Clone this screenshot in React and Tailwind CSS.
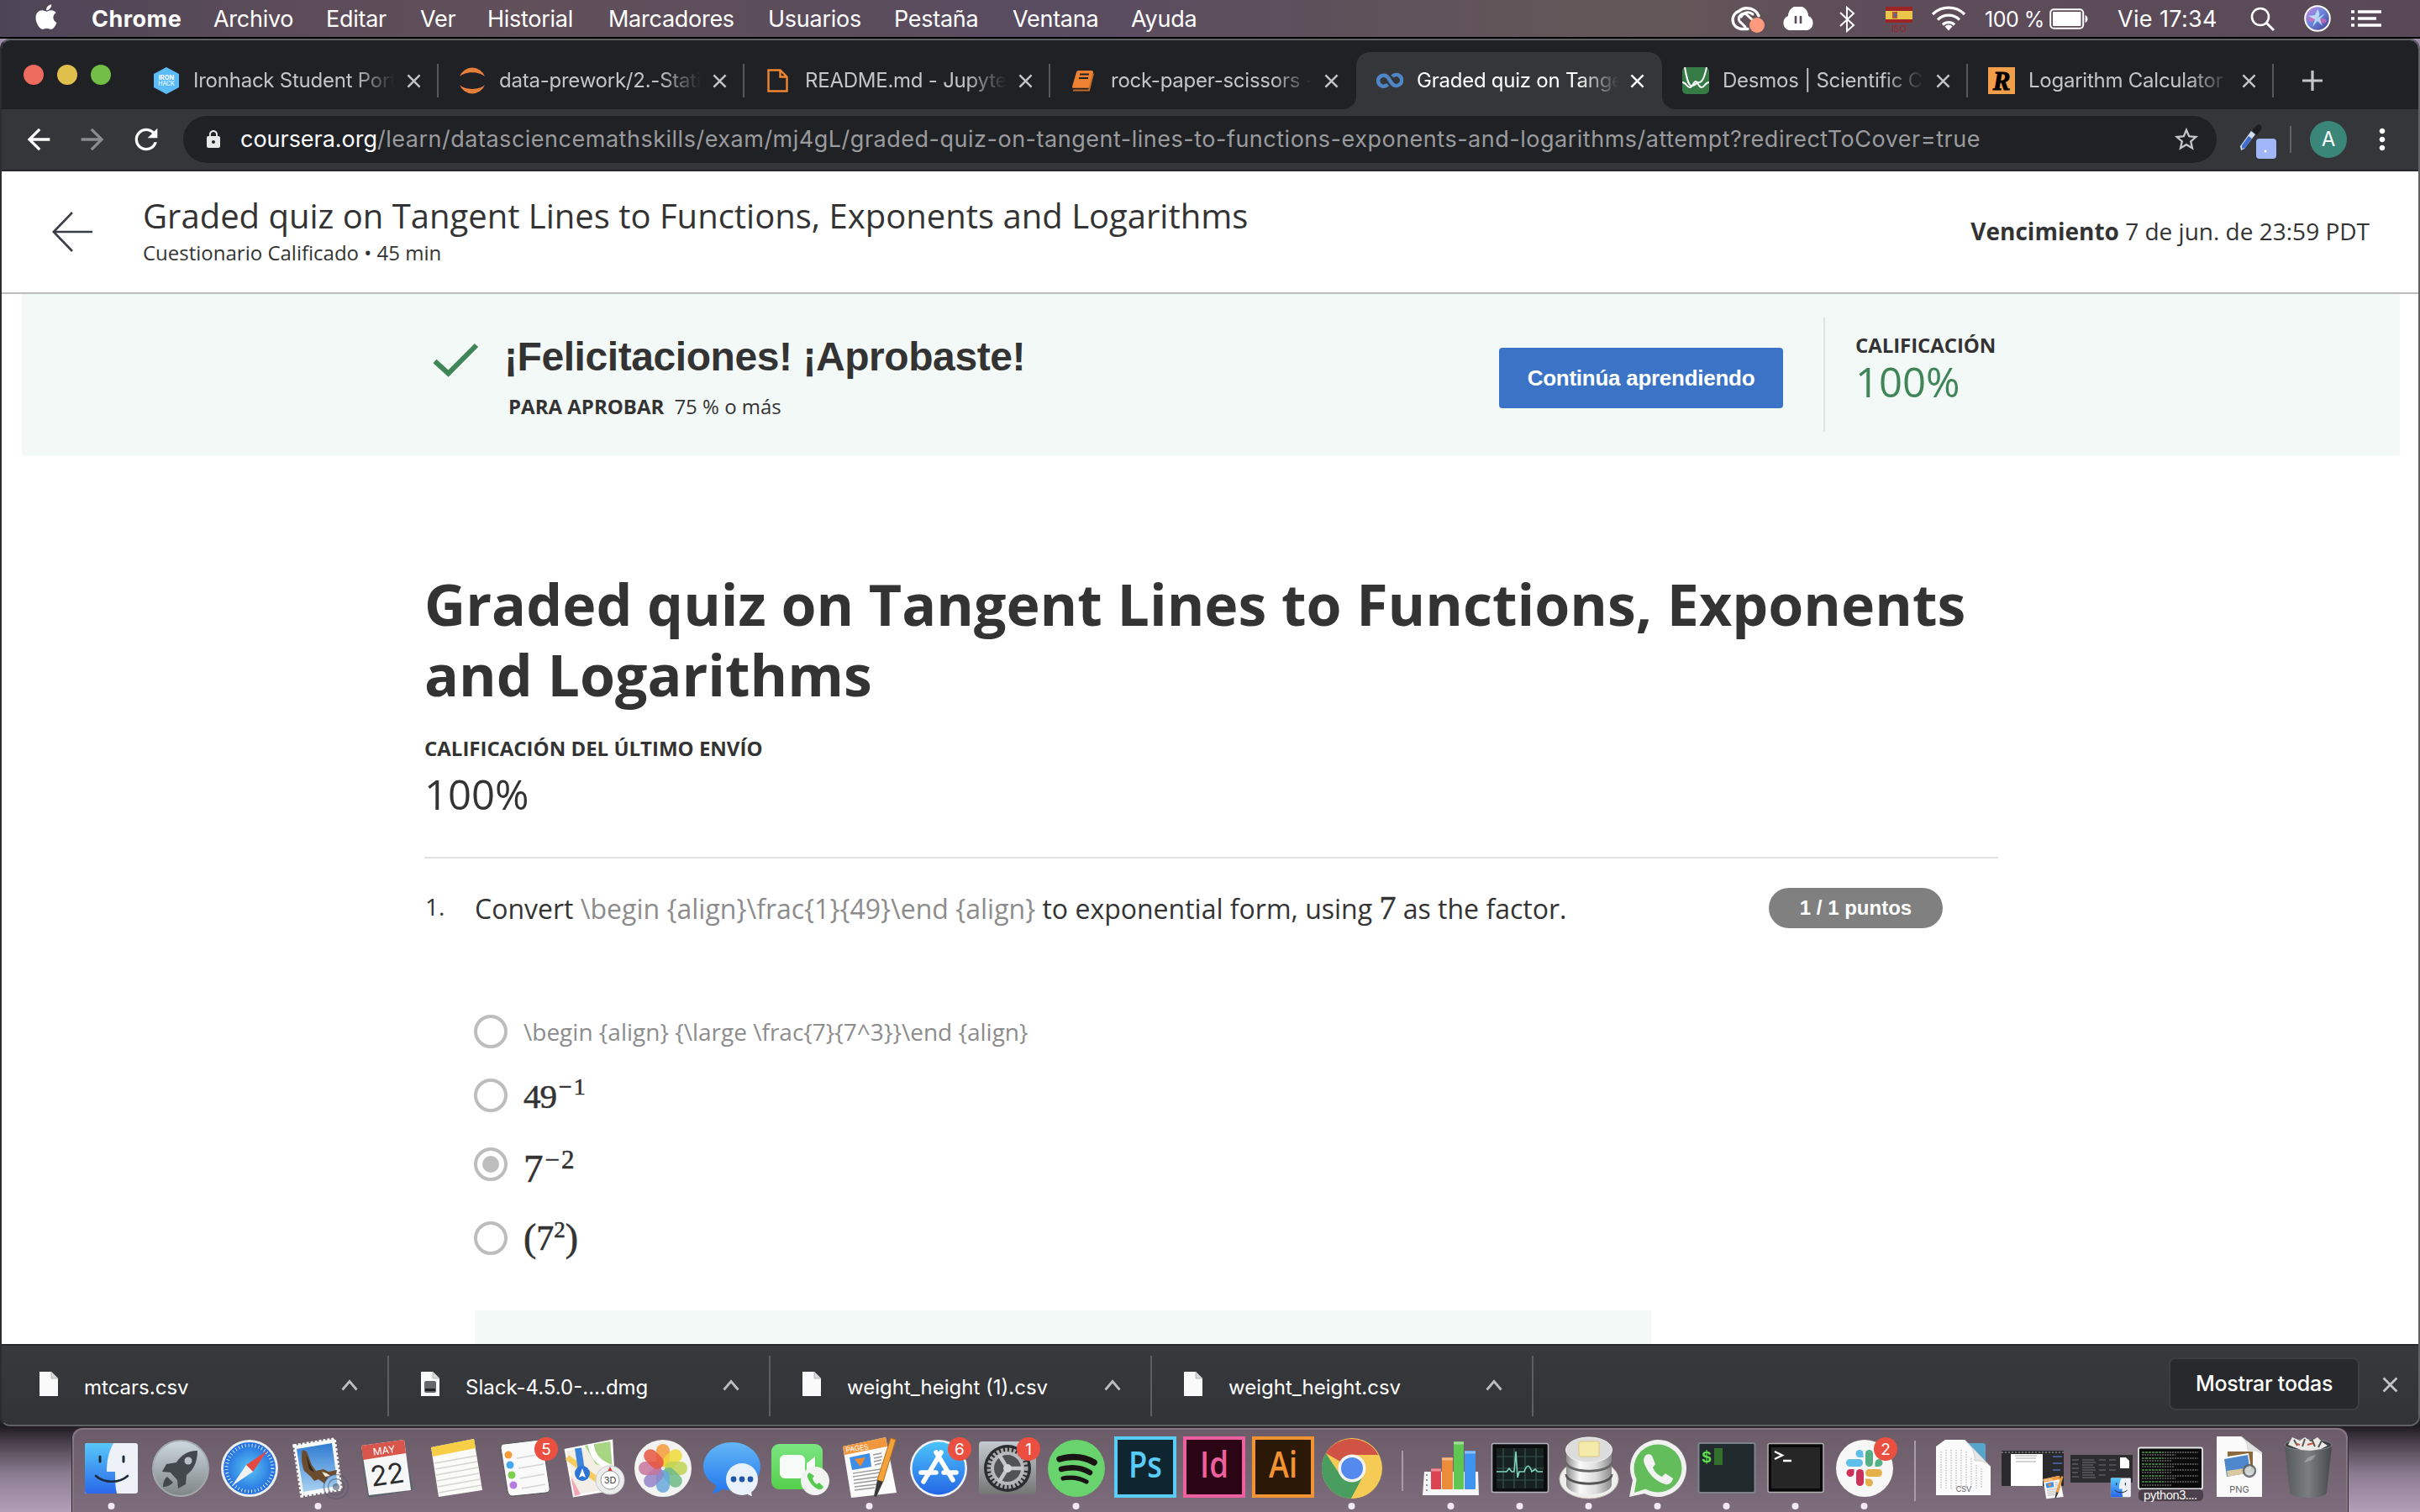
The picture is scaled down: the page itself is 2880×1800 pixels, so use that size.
import React from "react";
import { FaApple } from "react-icons/fa";
import { MdArrowBack, MdArrowForward, MdRefresh, MdLock, MdStarBorder, MdMoreVert } from "react-icons/md";

const UI = "font-['Inter','Liberation_Sans',sans-serif]";
const SERIF = "font-['Liberation_Serif',serif] [-webkit-text-stroke:0.6px_#333]";

/* ---------- macOS menu bar ---------- */

function MenuBar() {
  return (
    <div className="flex h-[46px] shrink-0 border-b-2 border-black bg-[linear-gradient(to_right,#4d4557,#5c4c59_12%,#61505a_22%,#5c4d5c_34%,#5a4c61_44%,#5f515a_56%,#645758_68%,#5e4e5a_76%,#594857)] text-[27px] leading-[46px] tracking-[-0.01em] whitespace-nowrap text-white">
      <div className="flex w-[109px] pt-[3px] pl-[38px]">
        <FaApple className="size-[34px]" />
      </div>
      <span className="w-[145px] font-bold tracking-[0.018em]">Chrome</span>
      <span className="w-[134px]">Archivo</span>
      <span className="w-[112px]">Editar</span>
      <span className="w-[80px]">Ver</span>
      <span className="w-[144px]">Historial</span>
      <span className="w-[190px]">Marcadores</span>
      <span className="w-[150px]">Usuarios</span>
      <span className="w-[141px]">Pestaña</span>
      <span className="w-[141px]">Ventana</span>
      <span className="w-[712px]">Ayuda</span>
      <svg className="mt-[8px] mr-[20px] h-[32px] w-[42px] shrink-0" viewBox="0 0 42 32" fill="none" stroke="#fff" strokeWidth="3.4" strokeLinecap="round">
        <path d="M22 26.500H14A11 11 0 0 1 12 5a12 12 0 0 1 9-3.200c7 0 12 4 14 9" />
        <path d="M19 24 12 17a6 6 0 0 1 8-8l9 8M14 12a9 9 0 0 1 14-3" strokeWidth="3" />
        <circle cx="33" cy="22" r="9" fill="#ff9b7c" stroke="none" />
      </svg>
      <svg className="mt-[8px] mr-[28px] h-[30px] w-[40px] shrink-0" viewBox="0 0 40 30">
        <path d="M9 28a9 9 0 0 1-1-17 12 12 0 0 1 24 0 9 9 0 0 1-1 17Z" fill="#fff" />
        <path d="M17 11v9M23 11v9" stroke="#5c4c59" strokeWidth="2.600" />
      </svg>
      <svg className="mt-[7px] mr-[34px] h-[32px] w-[21px] shrink-0" viewBox="0 0 21 32" fill="none" stroke="#fff" strokeWidth="2">
        <path d="m2 8 16 15-8 7V2l8 7L2 24" />
      </svg>
      <svg className="mt-[8px] mr-[21px] h-[32px] w-[34px] shrink-0" viewBox="0 0 34 32">
        <rect x="1" width="32" height="19" fill="#9d2526" />
        <rect x="1" y="5" width="32" height="10" fill="#ecc64a" />
        <rect x="9" y="6" width="6" height="8" fill="#b05a3a" />
        <rect x="11" y="8" width="3" height="4" fill="#5469a0" />
        <text x="17" y="30" textAnchor="middle" fontSize="11" fill="#9d2526" fontFamily="Inter">ISO</text>
      </svg>
      <svg className="mt-[7px] mr-[22px] h-[30px] w-[42px] shrink-0" viewBox="0 0 42 30" fill="none" stroke="#fff" strokeWidth="3.200">
        <path d="M2 10a27 27 0 0 1 38 0M8 16.500a18.500 18.500 0 0 1 26 0M14 22.500a10 10 0 0 1 14 0" />
        <path d="m16.500 24.500 4.500 5 4.500-5a6 6 0 0 0-9 0Z" fill="#fff" stroke="none" />
      </svg>
      <span className="w-[77px] text-[25px] tracking-[-0.02em]">100 %</span>
      <svg className="mt-[10px] mr-[35px] h-[25px] w-[46px] shrink-0" viewBox="0 0 46 25">
        <rect x="1.200" y="1.200" width="39" height="22.500" rx="4" fill="none" stroke="#fff" strokeWidth="2" />
        <rect x="4" y="4" width="33.500" height="17" rx="1" fill="#fff" />
        <path d="M42.500 8c4 1.500 4 7.500 0 9Z" fill="#fff" />
      </svg>
      <span className="w-[158px] tracking-[0.013em]">Vie 17:34</span>
      <svg className="mt-[8px] mr-[34px] h-[30px] w-[30px] shrink-0" viewBox="0 0 30 30" fill="none" stroke="#fff" strokeWidth="2.600">
        <circle cx="12" cy="12" r="10" />
        <path d="m19 19 9 9" strokeWidth="3" />
      </svg>
      <svg className="mt-[6px] mr-[24px] h-[32px] w-[32px] shrink-0" viewBox="0 0 32 32">
        <defs>
          <linearGradient id="siri" x1="0" y1="0" x2="1" y2="1">
            <stop offset="0" stopColor="#d884d8" />
            <stop offset=".45" stopColor="#6c86e0" />
            <stop offset="1" stopColor="#3d3a86" />
          </linearGradient>
        </defs>
        <circle cx="16" cy="16" r="14.800" fill="url(#siri)" stroke="#fff" strokeWidth="2" />
        <path d="M5 18c4-5 7-7 9-2-3 4-6 5-9 2Z" fill="#e06ab4" opacity=".8" />
        <path d="M18 17c5-2 8-1 9 2-2 4-6 4-9-2Z" fill="#e06ab4" opacity=".7" />
        <path d="M16 5c3 4 3 7 1 10l8-5-6 7 3 8-6-6-6 7 3-9-8-4 8-1Z" fill="#c9f4ff" opacity=".75" />
      </svg>
      <svg className="mt-[12px] h-[22px] w-[38px] shrink-0" viewBox="0 0 38 22" stroke="#fff" strokeWidth="3.600">
        <path d="M0 2h4M8 2h28M0 10h4M8 10h22M0 18h4M8 18h28" />
      </svg>
    </div>
  );
}

/* ---------- Tabs ---------- */

const favicons = {
  iron: (
    <svg viewBox="0 0 32 32" className="size-8">
      <path d="m16 0 15 8v16l-15 8-15-8V8Z" fill="#5cbcf8" />
      <text x="16" y="15" textAnchor="middle" fontSize="7.500" fontWeight="700" fill="#fff" fontFamily="Inter">IRON</text>
      <text x="16" y="22" textAnchor="middle" fontSize="7" fill="#fff" fontFamily="Inter">HACK</text>
    </svg>
  ),
  jupyter: (
    <svg viewBox="0 0 32 32" className="size-8" fill="#e8803b">
      <path d="M1 11a16 16 0 0 1 30 0C24 4.500 8 4.500 1 11Z" />
      <path d="M1 21a16 16 0 0 0 30 0C24 27.500 8 27.500 1 21Z" />
    </svg>
  ),
  doc: (
    <svg viewBox="0 0 32 32" className="size-8" fill="none" stroke="#f08731" strokeWidth="2.400">
      <path d="M4.500 3.500h14l8 8v17h-22ZM18.500 3.500v8h8" />
    </svg>
  ),
  book: (
    <svg viewBox="0 0 32 32" className="size-8">
      <path d="M9 4h16a2 2 0 0 1 2 2l-4 19H3a2 2 0 0 1-1-2L7 6a3 3 0 0 1 2-2Z" fill="#ef8230" />
      <path d="M11 8.500h11M10 13h11" stroke="#202124" strokeWidth="2" />
      <path d="M3 25.500h19" stroke="#202124" strokeWidth="1.600" />
      <path d="M3 27.500h19l5-20" stroke="#c56b28" strokeWidth="2" fill="none" />
    </svg>
  ),
  coursera: (
    <svg viewBox="0 0 32 32" className="size-8" fill="none" stroke="#4f86c6" strokeWidth="4.600">
      <path d="M13.500 20.500A6.500 6.500 0 1 1 13 11.500c2.500 2 4 7 6.500 9a6.500 6.500 0 1 0-.500-9.500" />
    </svg>
  ),
  desmos: (
    <svg viewBox="0 0 32 32" className="size-8">
      <rect width="32" height="32" rx="5" fill="#367a45" />
      <path d="M3 0c2 11 4 22 8 22 5 0 6-4 9-4 4 0 7-8 9-18" fill="none" stroke="#fff" strokeWidth="2" />
      <path d="M0 18c5 0 5 6 9 6s4-7 7-7 3 7 7 7 4-6 9-6" fill="none" stroke="#fff" strokeWidth="2" />
    </svg>
  ),
  r: (
    <svg viewBox="0 0 32 32" className="size-8">
      <rect width="32" height="32" fill="#f29f4c" />
      <text x="16" y="26.500" textAnchor="middle" fontSize="31" fontWeight="700" fontStyle="italic" fill="#000" stroke="#000" strokeWidth="1" fontFamily="Liberation Serif">R</text>
    </svg>
  ),
};

const tabs = [
  { icon: "iron", title: "Ironhack Student Portal", sep: true },
  { icon: "jupyter", title: "data-prework/2.-Statistics", sep: true },
  { icon: "doc", title: "README.md - Jupyter", sep: true },
  { icon: "book", title: "rock-paper-scissors -", sep: false },
  { icon: "coursera", title: "Graded quiz on Tangent", active: true },
  { icon: "desmos", title: "Desmos | Scientific Calc", sep: true },
  { icon: "r", title: "Logarithm Calculator", sep: true },
];

function Cross({ className }) {
  return (
    <svg viewBox="0 0 18 18" className={className} fill="none" stroke="currentColor" strokeWidth="2.600">
      <path d="m1.500 1.500 15 15M16.500 1.500l-15 15" />
    </svg>
  );
}

function Tab({ icon, title, sep, active }) {
  return (
    <div className={active ? "relative flex h-[68px] w-[364px] shrink-0 items-center rounded-t-2xl bg-[#35363a] pl-6 text-white" : "relative flex h-[68px] w-[364px] shrink-0 items-center pl-6 text-[#c3c5c9]"}>
      {active && (
        <>
          <span className="absolute bottom-0 -left-4 size-4 bg-[radial-gradient(circle_at_top_left,transparent_16px,#35363a_16.500px)]" />
          <span className="absolute -right-4 bottom-0 size-4 bg-[radial-gradient(circle_at_top_right,transparent_16px,#35363a_16.500px)]" />
        </>
      )}
      <span className="w-[48px] shrink-0">{favicons[icon]}</span>
      <span className="w-[240px] shrink-0 overflow-hidden text-[24px] tracking-[-0.01em] whitespace-nowrap [mask-image:linear-gradient(to_right,black_80%,transparent_100%)]">{title}</span>
      <Cross className="ml-[14px] size-[17px]" />
      {sep && <span className="ml-auto h-10 w-[2px] bg-[#55575b]" />}
    </div>
  );
}

function TabStrip() {
  return (
    <div className="flex h-[82px] shrink-0 items-end bg-[#202124]">
      <div className="flex h-[68px] w-[156px] shrink-0 gap-4 pt-[15px] pl-[26px]">
        <span className="size-6 rounded-full bg-[#ed6a5e]" />
        <span className="size-6 rounded-full bg-[#e0c04c]" />
        <span className="size-6 rounded-full bg-[#72be47]" />
      </div>
      {tabs.map((t) => (
        <Tab key={t.title} {...t} />
      ))}
      <svg viewBox="0 0 24 24" className="mb-[22px] ml-[34px] size-6" stroke="#c3c5c9" strokeWidth="3.200">
        <path d="M12 0v24M0 12h24" />
      </svg>
    </div>
  );
}

function Toolbar() {
  return (
    <div className="flex h-[74px] shrink-0 items-center border-b-2 border-[#28272b] bg-[#35363a] pl-[24px] text-white">
      <MdArrowBack className="size-10" />
      <MdArrowForward className="ml-6 size-10 text-[#8b8c8f]" />
      <MdRefresh className="ml-6 size-10" />
      <div className="ml-[24px] flex h-14 w-[2420px] items-center rounded-full bg-[#202124] pl-[24px]">
        <MdLock className="size-6 text-[#e8e8e8]" />
        <span className="ml-[20px] text-[27px] tracking-[0.510px] whitespace-nowrap text-[#9a9b9e]">
          <span className="tracking-[-0.001em] text-white">coursera.org</span>/learn/datasciencemathskills/exam/mj4gL/graded-quiz-on-tangent-lines-to-functions-exponents-and-logarithms/attempt?redirectToCover=true
        </span>
        <MdStarBorder className="mr-[19px] ml-auto size-[34px] shrink-0 text-[#c6c6c8]" />
      </div>
      <svg viewBox="0 0 46 46" className="ml-[28px] h-[46px] w-[46px]">
        <path d="m0 31 13-18 5 4L5 34l-4 2Z" fill="#d5deee" />
        <path d="m2 30 8-11 4 3-8 11-4 1Z" fill="#3f6ed0" />
        <path d="m14 12 6-6c3-2 7 1 5 5l-5 7Z" fill="#1d1d1f" />
        <rect x="19" y="22" width="24" height="24" rx="4" fill="#a1b5fb" />
        <circle cx="30" cy="37" r="1.500" fill="#fff" />
      </svg>
      <span className="ml-[13px] h-8 w-[2px] bg-[#5f6165]" />
      <span className="ml-[22px] flex size-11 items-center justify-center rounded-full bg-[#3a877a] text-[24px]">A</span>
      <MdMoreVert className="ml-[22px] size-10" />
    </div>
  );
}

/* ---------- Page ---------- */

function QuizHeader() {
  return (
    <div className="flex h-[146px] shrink-0 border-b-2 border-[#bdbdbd] bg-white text-[#333]">
      <svg viewBox="0 0 48 48" className="mt-[48px] ml-[60px] h-12 w-12" fill="none" stroke="#3a3d45" strokeWidth="2.600">
        <path d="M24 1 1.800 24 24 47M2 24h46" />
      </svg>
      <div className="ml-[60px] pt-[29px]">
        <div className="text-[40px] leading-[48px] whitespace-nowrap">Graded quiz on Tangent Lines to Functions, Exponents and Logarithms</div>
        <div className="mt-1 text-[24px] leading-8">Cuestionario Calificado • 45 min</div>
      </div>
      <div className="mr-[58px] ml-auto self-center pb-[2px] text-[28px] leading-10">
        <span className="font-bold">Vencimiento</span> 7 de jun. de 23:59 PDT
      </div>
    </div>
  );
}

function Banner() {
  return (
    <div className="mr-[22px] ml-[24px] flex h-[192px] shrink-0 bg-[#f3f9f7] text-[#333]">
      <svg viewBox="0 0 56 42" className="mt-[58px] ml-[488px] h-[42px] w-[56px]" fill="none" stroke="#3f8558" strokeWidth="6">
        <path d="m3.500 22 16 14.500L53 3" />
      </svg>
      <div className="ml-[30px] w-[1184px] pt-[47px]">
        <div className="font-['Liberation_Sans',Arial,sans-serif] text-[48px] leading-[56px] font-bold tracking-[-0.009em]">¡Felicitaciones! ¡Aprobaste!</div>
        <div className="mt-[15px] ml-[5px] text-[24px] leading-8">
          <span className="mr-3 font-bold">PARA APROBAR</span>75 % o más
        </div>
      </div>
      <button className="mt-[64px] flex h-[72px] w-[338px] items-center justify-center rounded-[4px] bg-[#3b74c6] font-['Liberation_Sans',Arial,sans-serif] text-[26px] font-bold tracking-[-0.010em] whitespace-nowrap text-white">
        Continúa aprendiendo
      </button>
      <div className="mt-[28px] ml-[48px] h-[136px] w-[2px] bg-[#dfe3e2]" />
      <div className="ml-[36px] pt-[45px]">
        <div className="text-[24px] leading-8 font-bold tracking-[-0.003em]">CALIFICACIÓN</div>
        <div className="-mt-px text-[49px] leading-[56px] text-[#3f8558]">100%</div>
      </div>
    </div>
  );
}

function Option({ checked, className, children }) {
  return (
    <div className={"flex h-10 items-start " + className}>
      <span className="mr-[19px] flex size-10 shrink-0 items-center justify-center rounded-full border-4 border-[#bdbdbd]">
        {checked && <span className="size-5 rounded-full bg-[#bdbdbd]" />}
      </span>
      {children}
    </div>
  );
}

function Question() {
  return (
    <div className="flex pl-px">
      <div className="mt-[37px] w-[59px] shrink-0 text-[28px] leading-10">1.</div>
      <div className="w-[1401px] shrink-0">
        <div className="mt-[39px] h-10 text-[32px] leading-10 whitespace-nowrap">
          Convert <span className="text-[#8c8c8c]">\begin {"{align}"}\frac{"{1}{49}"}\end {"{align}"}</span> to exponential form, using{" "}
          <span className={"text-[40px] leading-none " + SERIF}>7</span> as the factor.
        </div>
        <div className="mt-[107px] -ml-px">
          <Option className="">
            <span className="text-[28px] leading-10 whitespace-nowrap text-[#8c8c8c]">\begin {"{align}"} {"{"}\large \frac{"{7}{7^3}}"}\end {"{align}"}</span>
          </Option>
          <Option className="mt-9">
            <span className={"mt-px text-[41px] leading-10 tracking-[-1px] " + SERIF}>49</span>
            <span className={"-mt-1 ml-[3px] text-[28px] leading-7 tracking-[2px] " + SERIF}>−1</span>
          </Option>
          <Option checked className="mt-[42px]">
            <span className={"mt-[5px] text-[47px] leading-10 " + SERIF}>7</span>
            <span className={"ml-[2px] text-[31px] leading-[30px] tracking-[2px] " + SERIF}>−2</span>
          </Option>
          <Option className="mt-12">
            <span className={"text-[46px] leading-10 " + SERIF}>(</span>
            <span className={"text-[42px] leading-10 " + SERIF}>7</span>
            <span className={"-mt-1 text-[27px] leading-7 " + SERIF}>2</span>
            <span className={"text-[46px] leading-10 " + SERIF}>)</span>
          </Option>
        </div>
        <div className="mt-[66px] h-10 w-[1400px] bg-[#f3f9f7]" />
      </div>
      <div className="mt-[35px] ml-[139px] flex h-12 w-[207px] items-center justify-center rounded-full bg-[#808080] font-['Liberation_Sans',Arial,sans-serif] text-[24px] font-bold text-white">
        1 / 1 puntos
      </div>
    </div>
  );
}

function Page() {
  return (
    <div className="flex h-[1396px] shrink-0 flex-col overflow-hidden bg-white font-['Open_Sans','Noto_Sans',sans-serif]">
      <QuizHeader />
      <Banner />
      <div className="ml-[503px] w-[1873px] text-[#333]">
        <h1 className="mt-[135px] text-[68px] leading-[84px] font-bold whitespace-nowrap">
          Graded quiz on Tangent Lines to Functions, Exponents
          <br />
          and Logarithms
        </h1>
        <div className="mt-[30px] text-[24px] leading-8 font-bold">CALIFICACIÓN DEL ÚLTIMO ENVÍO</div>
        <div className="mt-[10px] text-[49px] leading-[56px]">100%</div>
        <div className="mt-[47px] h-[2px] bg-[#e1e1e1]" />
        <Question />
      </div>
    </div>
  );
}

/* ---------- Downloads shelf ---------- */

function DownloadItem({ name, disk, className }) {
  return (
    <div className={"flex h-[72px] shrink-0 items-start border-r-2 border-[#5d5e62] " + className}>
      <svg viewBox="0 0 24 32" className="mt-[18px] h-[32px] w-[24px]">
        <path d="M1 1h14l8 8v21H1Z" fill="#fafafa" />
        <path d="M15 1v8h8" fill="#d9d9d9" stroke="#aaa" strokeWidth=".8" />
        {disk && <rect x="5" y="12" width="14" height="14" rx="2" fill="#64686c" />}
        {disk && <rect x="6" y="21" width="12" height="3" fill="#1f2022" />}
      </svg>
      <span className="mt-[18px] ml-[30px] text-[24px] leading-10 whitespace-nowrap">{name}</span>
      <svg viewBox="0 0 20 14" className="mt-[28px] mr-[35px] ml-auto h-[14px] w-5" fill="none" stroke="#bdbdbf" strokeWidth="2.800">
        <path d="m1.500 12.500 8.500-10 8.500 10" />
      </svg>
    </div>
  );
}

function Downloads() {
  return (
    <div className="flex h-[96px] shrink-0 items-start border-t-2 border-[#26282a] bg-[linear-gradient(#38393c,#323337)] pt-3 text-white">
      <DownloadItem name="mtcars.csv" className="w-[461px] pl-[44px]" />
      <DownloadItem name="Slack-4.5.0-....dmg" disk className="w-[454px] pl-[37px]" />
      <DownloadItem name="weight_height (1).csv" className="w-[454px] pl-[37px]" />
      <DownloadItem name="weight_height.csv" className="w-[454px] pl-[37px]" />
      <div className="mt-[2px] ml-auto flex h-[63px] w-[227px] items-center justify-center rounded-lg border-2 border-[#3d3e41] bg-[#28292c] text-[25px] font-medium tracking-[-0.01em] whitespace-nowrap">Mostrar todas</div>
      <Cross className="mt-[25px] mr-[24px] ml-[27px] size-[19px] text-[#c4c4c6]" />
    </div>
  );
}

/* ---------- Dock ---------- */

function Badge({ n }) {
  return (
    <g>
      <circle cx="66" cy="24" r="14" fill="#ea4f40" />
      <text x="66" y="31" textAnchor="middle" fontSize="19" fill="#fff" fontFamily="Inter">{n}</text>
    </g>
  );
}

function Gradient({ id, from, to }) {
  return (
    <linearGradient id={id} x1="0" y1="0" x2="0" y2="1">
      <stop offset="0" stopColor={from} />
      <stop offset="1" stopColor={to} />
    </linearGradient>
  );
}

const FinderFace = () => (
  <g>
    <rect x="9" y="17" width="63" height="60" rx="3" fill="#eef1f7" />
    <path d="M12 17h31c-6 11-8 22-8 34h10c0 9 0 18 2 26H12a3 3 0 0 1-3-3V20a3 3 0 0 1 3-3Z" fill="url(#finder)" />
    <path d="M27 33v6M55 33v6" stroke="#1d2a3c" strokeWidth="3" strokeLinecap="round" />
    <path d="M22 56c10 9 28 9 38 0" stroke="#1d2a3c" strokeWidth="2.600" fill="none" strokeLinecap="round" />
  </g>
);

const PagesIcon = () => (
  <g>
    <path d="m9 21 51-11 13 66-54 6Z" fill="#fbfbfb" />
    <path d="m9 21 51-11 2 11-51 10Z" fill="#f0973d" />
    <text x="13" y="28" fontSize="8.500" fill="#fff" fontFamily="Inter" transform="rotate(-8 13 28)">PAGES</text>
    <path d="m17 34 24-5 2 16-23 4Z" fill="#3c8ee8" />
    <path d="m23 36 13-2-6 11Z" fill="#f08a2c" />
    <path d="m45 31 10-2M46 35l10-2M46 39l9-2M47 43l8-2M21 53l33-5M21 57l32-5M22 61l30-4M22 65l29-4M23 69l26-3M23 73l24-3" stroke="#9a9a9a" strokeWidth="1.300" />
    <path d="m66 11 6 2-15 50-7-2Z" fill="#f3a33a" stroke="#b76d1c" />
    <path d="m50 61 7 2-8 18-3-1Z" fill="#3a3a3c" />
  </g>
);

const photoPetals = ["#f59b3c", "#efd93b", "#bfd355", "#6db987", "#68a9dd", "#9384c9", "#c5749e", "#e8553f"];

function AdobeTile({ label, edge, fill }) {
  return (
    <g>
      <rect x="6" y="11" width="70" height="69" fill={fill} stroke={edge} strokeWidth="4" />
      <text x="41" y="58" textAnchor="middle" fontSize="44" fontWeight="600" fill={edge} fontFamily="Open Sans" textLength={label === "Ps" ? 40 : 34} lengthAdjust="spacingAndGlyphs">{label}</text>
    </g>
  );
}

const apps = [
  { id: "finder", dot: true, art: <g><defs><Gradient id="finder" from="#58c8fa" to="#2a68ea" /></defs><FinderFace /></g> },
  {
    id: "launchpad",
    art: (
      <g>
        <defs><Gradient id="launch" from="#cdd9df" to="#7f8585" /></defs>
        <circle cx="41" cy="47" r="33" fill="url(#launch)" stroke="#a3aaad" strokeWidth="2" />
        <path d="M61 26c-12 0-20 6-25 14l-12 2-5 9 10 1 8 9 1 10 9-5 1-11c8-6 13-15 13-29Z" fill="#43484c" />
        <circle cx="50" cy="38" r="4.500" fill="#b8c1c5" />
        <path d="M25 57c-4 3-5 8-5 12 5 0 9-2 12-5Z" fill="#43484c" />
      </g>
    ),
  },
  {
    id: "safari",
    art: (
      <g>
        <defs><radialGradient id="safari"><stop offset="0" stopColor="#5ac6f2" /><stop offset="1" stopColor="#216ce0" /></radialGradient></defs>
        <circle cx="41" cy="47" r="34" fill="#eceff2" />
        <circle cx="41" cy="47" r="31" fill="url(#safari)" />
        <circle cx="41" cy="47" r="27.500" fill="none" stroke="#d6ecfa" strokeWidth="4" strokeDasharray="1 3" />
        <path d="m62 26-17 25-8-8Z" fill="#e5483e" />
        <path d="m20 68 17-25 8 8Z" fill="#f2f2f2" />
      </g>
    ),
  },
  {
    id: "mail",
    dot: true,
    art: (
      <g>
        <defs><Gradient id="sky" from="#2f7bd2" to="#a8d2f2" /></defs>
        <path d="m12 20 48-8 8 60-47 8Z" fill="#f7f8f8" stroke="#f7f8f8" strokeWidth="3.500" strokeDasharray="3 2" />
        <path d="m15 24 42-7 7 51-41 7Z" fill="url(#sky)" />
        <path d="m22 25 5 2 6 16 5 7 9-2 6 3 10-2-1 5-9 3-5 8-7-5-5 2-4-5-8-7c-3-8-4-16-2-25Z" fill="#6b4c2f" />
        <path d="m26 30 5 13 5 9-6-4Z" fill="#2f261f" />
        <path d="m45 51 6 2 4 3-6 1Z" fill="#f1ead9" />
        <circle cx="62" cy="69" r="14.500" fill="none" stroke="#4d566a" strokeWidth="1.600" opacity=".55" />
        <circle cx="62" cy="69" r="9.500" fill="none" stroke="#4d566a" strokeWidth="1.600" opacity=".55" />
        <circle cx="62" cy="69" r="4" fill="#4d566a" opacity=".6" />
      </g>
    ),
  },
  {
    id: "calendar",
    art: (
      <g>
        <path d="m9 25 51-10 12 58-54 9Z" fill="#59646c" />
        <path d="m10 20 51-7 8 60-50 6Z" fill="#f7f7f7" />
        <path d="m10 20 51-7 2 16-51 8Z" fill="#d8554c" />
        <text x="37" y="30" textAnchor="middle" fontSize="12" fill="#fff" fontFamily="Inter" transform="rotate(-8 37 25)">MAY</text>
        <text x="41" y="66" textAnchor="middle" fontSize="33" fill="#2d2d2d" fontFamily="Inter" transform="rotate(-8 41 56)">22</text>
      </g>
    ),
  },
  {
    id: "notes",
    art: (
      <g>
        <path d="m11 22 51-10 10 61-52 8Z" fill="#fbfbf8" />
        <path d="m11 22 51-10 2 11-51 10Z" fill="#f6cf47" />
        <path d="m15 41 50-9M16 48l50-9M17 55l50-9M18 62l50-9M19 69l50-9M20 76l51-9" stroke="#d4d4d0" strokeWidth="1.500" />
      </g>
    ),
  },
  {
    id: "reminders",
    art: (
      <g>
        <path d="M16 18 58 13q3 0 4 4l8 53q1 5-4 6l-40 4q-5 0-6-6l-8-51q0-5 4-5Z" fill="#fafafa" stroke="#55565a" strokeWidth="1" />
        <circle cx="21" cy="31" r="4.500" fill="#f39c38" />
        <circle cx="23" cy="43" r="4.500" fill="#46a6ee" />
        <circle cx="25" cy="55" r="4.500" fill="#7cd04c" />
        <circle cx="27" cy="67" r="4.500" fill="#b87ae0" />
        <path d="m31 35 30-5M33 47l30-5M35 59l29-5M37 71l28-5" stroke="#d5d5d8" strokeWidth="1.400" />
        <Badge n="5" />
      </g>
    ),
  },
  {
    id: "maps",
    art: (
      <g>
        <path d="m7 25 55-11 3 58-48 8Z" fill="#f4efe6" stroke="#fff" strokeWidth="2.500" />
        <path d="m30 20 30-5 3 33-20-6Z" fill="#a7d584" />
        <path d="m9 34 48 36" stroke="#f7cc5c" strokeWidth="7" />
        <path d="m22 23 5 33" stroke="#3d84dc" strokeWidth="8" />
        <path d="M37 18c2 14 8 22 24 28" stroke="#fff" strokeWidth="7" fill="none" />
        <path d="m13 56 12 22-7 2Z" fill="#f3a6b5" />
        <circle cx="27" cy="53" r="9" fill="#2d74d8" />
        <path d="m27 47 4 11-4-2-4 2Z" fill="#fff" />
        <circle cx="60" cy="61" r="17" fill="#eceded" stroke="#c9cbcd" />
        <circle cx="60" cy="61" r="11" fill="#fff" stroke="#9a9a9d" />
        <text x="60" y="65" textAnchor="middle" fontSize="11" fill="#444" fontFamily="Inter">3D</text>
        <path d="m60 45 2.500 5h-5Z" fill="#d33" />
      </g>
    ),
  },
  {
    id: "photos",
    art: (
      <g>
        <circle cx="41" cy="47" r="34" fill="#f3f3f2" />
        {photoPetals.map((c, i) => (
          <rect key={c} x="33" y="18" width="16" height="27" rx="8" fill={c} opacity=".85" transform={`rotate(${i * 45} 41 47)`} />
        ))}
      </g>
    ),
  },
  {
    id: "messages",
    art: (
      <g>
        <defs><Gradient id="msg" from="#64b7f6" to="#2277ee" /></defs>
        <path d="M41 16c19 0 34 13 34 29S60 73 41 73c-4 0-8-.500-11-1.500-3 3-8 5-13 5 3-3 5-6 5-9C13 62 7 54 7 45c0-16 15-29 34-29Z" fill="url(#msg)" />
        <circle cx="53" cy="60" r="19" fill="#e9f2fb" />
        <path d="M58 76c3 3 5 4 7 4-1-3-1-5 0-8Z" fill="#e9f2fb" />
        <circle cx="43" cy="60" r="3.400" fill="#2456a8" /><circle cx="53" cy="60" r="3.400" fill="#2456a8" /><circle cx="63" cy="60" r="3.400" fill="#2456a8" />
      </g>
    ),
  },
  {
    id: "facetime",
    art: (
      <g>
        <defs><Gradient id="ft" from="#7be581" to="#56cf4b" /></defs>
        <rect x="6" y="18" width="61" height="54" rx="9" fill="url(#ft)" />
        <rect x="16" y="31" width="30" height="28" rx="6" fill="#f7fbf7" />
        <path d="m48 41 10-8v24l-10-8Z" fill="#f7fbf7" />
        <circle cx="58" cy="62" r="17" fill="#f2f4f2" />
        <path d="M51 52c-2 2-3 4-1 8 3 6 7 10 12 12 3 1 5-1 6-3l-5-5-3 2c-3-2-4-4-5-7l2-3Z" fill="#55c950" />
      </g>
    ),
  },
  { id: "pages", dot: true, art: <PagesIcon /> },
  {
    id: "appstore",
    art: (
      <g>
        <defs><Gradient id="store" from="#4cc3fa" to="#2466e6" /></defs>
        <circle cx="41" cy="47" r="34" fill="#f1f2f4" />
        <circle cx="41" cy="47" r="31.500" fill="url(#store)" />
        <path d="M44 28 28 55M38 28l20 33M20 52h18M47 52h15M26 58l-3 5" stroke="#fff" strokeWidth="5.500" strokeLinecap="round" />
        <Badge n="6" />
      </g>
    ),
  },
  {
    id: "settings",
    art: (
      <g>
        <defs><Gradient id="set" from="#c3cbd0" to="#757674" /></defs>
        <rect x="7" y="15" width="68" height="63" rx="4" fill="url(#set)" />
        <circle cx="41" cy="47" r="28" fill="#2b2c2e" />
        <circle cx="41" cy="47" r="22" fill="none" stroke="#a6a8aa" strokeWidth="5" strokeDasharray="3 2" />
        <circle cx="41" cy="47" r="18" fill="#505255" stroke="#b7b9bb" strokeWidth="4" />
        <path d="M41 47H60M41 47 31 31M41 47 31 63" stroke="#c3c5c7" strokeWidth="4.500" />
        <circle cx="41" cy="47" r="5" fill="#d3d4d5" />
        <Badge n="1" />
      </g>
    ),
  },
  {
    id: "spotify",
    dot: true,
    art: (
      <g fill="none" stroke="#191414" strokeLinecap="round">
        <circle cx="41" cy="47" r="34" fill="#69d36e" stroke="none" />
        <path d="M21 36c14-4 29-3 41 4" strokeWidth="7.500" />
        <path d="M23 48c12-3 24-2 34 4" strokeWidth="6.500" />
        <path d="M25 59c10-2 19-1 28 4" strokeWidth="5.200" />
      </g>
    ),
  },
  { id: "ps", art: <AdobeTile label="Ps" edge="#58cdf8" fill="#0f2530" /> },
  { id: "id", art: <AdobeTile label="Id" edge="#ee5f9f" fill="#2b0513" /> },
  { id: "ai", art: <AdobeTile label="Ai" edge="#f19330" fill="#2c1806" /> },
  {
    id: "chrome",
    dot: true,
    art: (
      <g>
        <circle cx="41" cy="47" r="36" fill="#f5cb56" />
        <path d="M41 47 9.800 29A36 36 0 0 1 72.200 31H41Z" fill="#d05345" />
        <path d="M9.800 29A36 36 0 0 0 40 83L55 55 41 47 27 55Z" fill="#489d5f" />
        <path d="M41 31h31.200A36 36 0 0 1 40 83L55 55Z" fill="#f5cb56" />
        <circle cx="41" cy="47" r="16.500" fill="#f4f4f4" />
        <circle cx="41" cy="47" r="13" fill="#5489ee" />
      </g>
    ),
  },
];

const running = [
  {
    id: "numbers",
    dot: true,
    art: (
      <g>
        <path d="M9 51h64l1 28H7Z" fill="#f6f6f6" />
        <path d="M12 54v23" stroke="#999" strokeWidth="2" strokeDasharray="2 4" />
        <rect x="17" y="47" width="12" height="25" rx="1" fill="#dc4351" />
        <rect x="30" y="34" width="13" height="38" rx="1" fill="#ec8c38" />
        <rect x="44" y="15" width="12" height="57" rx="1" fill="#60c653" />
        <rect x="57" y="26" width="13" height="46" rx="1" fill="#3f94f0" />
        <path d="M17 49h12M30 36h13M44 17h12M57 28h13" stroke="#fff" strokeWidth="3" opacity=".4" />
      </g>
    ),
  },
  {
    id: "activity",
    dot: true,
    art: (
      <g>
        <rect x="7.500" y="17.500" width="67" height="58" rx="2" fill="#0b0c0c" stroke="#b2b6ba" strokeWidth="1.500" />
        <rect x="13" y="23" width="56" height="48" fill="#17211f" />
        <path d="M21 23v48M34 23v48M47 23v48M60 23v48M13 33h56M13 47h56M13 61h56" stroke="#34574e" strokeWidth="1.200" />
        <path d="M13 51h12l3-4 3 4h3l2-24 2 31 2-7h6c3-9 6-9 9 0l4-3 3 3h6" stroke="#7fd6be" strokeWidth="1.600" fill="none" />
      </g>
    ),
  },
  {
    id: "database",
    dot: true,
    art: (
      <g>
        <defs><linearGradient id="drum"><stop offset="0" stopColor="#8d8d8f" /><stop offset=".3" stopColor="#fafafa" /><stop offset=".65" stopColor="#dedede" /><stop offset="1" stopColor="#8a8a8c" /></linearGradient></defs>
        <ellipse cx="41" cy="60" rx="35" ry="23" fill="#eeeeec" stroke="#c8c2b4" />
        <path d="M14 54v12c0 16 54 16 54 0V54Z" fill="url(#drum)" />
        <path d="M14 54c0 15 54 15 54 0" stroke="#555" strokeWidth="3" fill="none" />
        <path d="M14 40v12c0 15 54 15 54 0V40Z" fill="url(#drum)" />
        <path d="M14 39c0 15 54 15 54 0" stroke="#666" strokeWidth="3" fill="none" />
        <path d="M14 24v13c0 15 54 15 54 0V24Z" fill="url(#drum)" />
        <ellipse cx="41" cy="25" rx="27.500" ry="15" fill="#dcdcdc" stroke="#f5f5f5" />
        <rect x="29" y="15" width="24" height="18" rx="2" fill="#f4ebaa" stroke="#d8cb7e" />
      </g>
    ),
  },
  {
    id: "whatsapp",
    dot: true,
    art: (
      <g>
        <path d="M41 13a34 34 0 1 1-16 64L7 81l4-20A34 34 0 0 1 41 13Z" fill="#f1f1f1" />
        <circle cx="41" cy="47" r="28.500" fill="#62bd5a" />
        <path d="m13 76 3-18 12 13Z" fill="#62bd5a" />
        <path d="M27 31c-3 3-4 7-1 13 5 11 13 19 24 22 4 1 8-2 9-7l-9-6-4 4c-5-2-9-6-11-11l3-4-4-10c-2-2-5-2-7-1Z" fill="#f3f3f3" />
      </g>
    ),
  },
  {
    id: "iterm",
    dot: true,
    art: (
      <g>
        <rect x="7.500" y="17" width="67" height="59" rx="2" fill="#212a2d" stroke="#7d8389" strokeWidth="2" />
        <text x="11" y="40" fontSize="20" fill="#5fe04c" fontWeight="700" fontFamily="Liberation Mono">$</text>
        <rect x="26" y="23" width="10" height="20" fill="#33702b" />
      </g>
    ),
  },
  {
    id: "terminal",
    dot: true,
    art: (
      <g>
        <rect x="8" y="17.500" width="66" height="58" rx="2" fill="#080808" stroke="#b0b0b2" strokeWidth="1.500" />
        <rect x="12" y="22" width="58" height="49" fill="#262626" />
        <path d="m16 27 9 4.500-9 4.500M26 38h10" stroke="#fff" strokeWidth="2.400" fill="none" />
      </g>
    ),
  },
  {
    id: "slack",
    dot: true,
    art: (
      <g>
        <circle cx="41" cy="47" r="34" fill="#f7f7f7" />
        <rect x="19" y="36" width="20" height="9" rx="4.500" fill="#5fbfea" />
        <path d="M39.500 34V29.500a4.500 4.500 0 1 0-4.500 4.500Z" fill="#5fbfea" />
        <rect x="42" y="25" width="9" height="20" rx="4.500" fill="#54b085" />
        <path d="M53.500 45V41a4.500 4.500 0 1 1 4.500 4Z" fill="#54b085" />
        <rect x="42" y="48" width="20" height="9" rx="4.500" fill="#e3b04a" />
        <path d="M42 59.500v4.500a4.500 4.500 0 1 0 4.500-4.500Z" fill="#e3b04a" />
        <rect x="31" y="48" width="9" height="20" rx="4.500" fill="#cb3159" />
        <path d="M28.500 48v4.500a4.500 4.500 0 1 1-4.500-4.500Z" fill="#cb3159" />
        <Badge n="2" />
      </g>
    ),
  },
];

const files = [
  {
    id: "csv",
    art: (
      <g>
        <rect x="15" y="17" width="52" height="50" rx="3" fill="#58a5cb" />
        <path d="M8 21 19 13H42L73 45V79H8Z" fill="#fbfbfb" />
        <path d="M14 27v44M20 25v46M26 25v46M32 25v46M38 25v46M44 27v44M50 35v36M56 43v28M62 47v24" stroke="#c4c4c4" strokeWidth="1.500" strokeDasharray="1.500 1.500" />
        <path d="M42 13c7 6 13 14 12 25 8-1 15 2 19 7Z" fill="#e7e7e7" stroke="#c7c7c7" strokeWidth=".8" />
        <text x="41" y="75" textAnchor="middle" fontSize="9" fill="#666" fontFamily="Inter">CSV</text>
      </g>
    ),
  },
  {
    id: "pages-window",
    art: (
      <g>
        <rect x="4" y="26" width="74" height="42" fill="#2a2a2c" />
        <rect x="15" y="30" width="38" height="38" fill="#fff" />
        <path d="M4 28h74" stroke="#6a6a6a" strokeWidth="2" strokeDasharray="2 2" />
        <path d="M20 32h26M21 35h24M21 39h24" stroke="#aaa" />
        <path d="M65 33h11M65 41h11M65 49h9" stroke="#4b6fb5" strokeWidth="1.500" />
        <g transform="translate(50 52) scale(.38)"><PagesIcon /></g>
      </g>
    ),
  },
  {
    id: "finder-window",
    art: (
      <g>
        <rect x="4" y="31" width="74" height="33" fill="#2d2d30" />
        <path d="M6 37h8M6 42h7M6 47h8M6 52h7M6 57h8M18 37h14M18 40h16M18 43h13M18 46h15M18 49h16M18 52h13M18 55h15M18 58h16M38 37h8M38 43h8M38 49h8M38 55h8M50 37h8M50 43h8M50 49h8" stroke="#727276" strokeWidth="1.200" />
        <path d="M63 34h7l4 4v9H63Z" fill="#fff" />
        <g transform="translate(48.500 52) scale(.38)"><FinderFace /></g>
      </g>
    ),
  },
  {
    id: "terminal-window",
    art: (
      <g>
        <rect x="3" y="22.500" width="76" height="49" rx="2" fill="#0a0a0a" stroke="#e8e8e8" strokeWidth="1.800" />
        <path d="M7 28h26M7 35h26M7 42h26M7 49h26M7 56h26M7 63h26" stroke="#4f9a48" strokeWidth="1.300" strokeDasharray="3 1" />
        <path d="M7 31h40M34 28h40M34 35h40M34 42h40M7 38h36M34 49h40M7 45h38M34 56h40M7 52h36M34 63h40M7 59h40M7 67h36" stroke="#8d8d8d" strokeWidth="1.200" strokeDasharray="2 1" />
        <rect x="3" y="72" width="77" height="14" rx="5" fill="#4c414b" />
        <text x="41" y="84" textAnchor="middle" fontSize="14" fill="#fff" fontFamily="Inter" textLength="64">python3....</text>
      </g>
    ),
  },
  {
    id: "png",
    art: (
      <g>
        <path d="M14 9H43L68 28V81H14Z" fill="#fafafa" />
        <path d="M43 9c6 4 8 9 8 17 7-1 13 0 17 4Z" fill="#e4e4e4" stroke="#ccc" strokeWidth=".8" />
        <rect x="27" y="27" width="30" height="25" fill="#8a6a3c" />
        <path d="m21 34 31-5 4 25-31 5Z" fill="#fff" />
        <path d="m23 36 28-5 3 21-28 5Z" fill="#4f87cc" />
        <path d="m26 50 28-4 1 6-28 5Z" fill="#d8c9a0" />
        <circle cx="53" cy="50" r="7" fill="#cfd6da" stroke="#5e5f60" strokeWidth="2.500" opacity=".85" />
        <text x="41" y="76" textAnchor="middle" fontSize="11" fill="#666" fontFamily="Inter">PNG</text>
      </g>
    ),
  },
  {
    id: "trash",
    art: (
      <g>
        <defs>
          <linearGradient id="trash"><stop offset="0" stopColor="#55595c" /><stop offset=".5" stopColor="#7b7f82" /><stop offset="1" stopColor="#45494c" /></linearGradient>
        </defs>
        <path d="M13 20c8 8 48 8 56 0l-6 56c-3 8-41 8-44 0Z" fill="url(#trash)" />
        <ellipse cx="41" cy="19" rx="28" ry="6.500" fill="#3d4043" stroke="#85898c" />
        <path d="m17 19 5-9 9 4 6-4 7 5 8-5 6 6 6 4-8 4-12 2-12-1Z" fill="#eceae6" />
        <path d="m24 13 4 7M37 12l-3 9M45 12l4 9M57 14l-4 8" stroke="#555" strokeWidth="2" />
        <path d="m40 19 7-2M27 18l4 1" stroke="#c8553d" strokeWidth="2" />
        <path d="M36 40c3-6 8-8 14-9-3 6-8 8-14 9Z" fill="#a7abad" opacity=".7" />
      </g>
    ),
  },
];

function DockIcon({ art, dot }) {
  return (
    <svg viewBox="0 0 82 100" className="h-[100px] w-[82px] shrink-0">
      {art}
      {dot && <circle cx="40.500" cy="92" r="4" fill="#f3e8f6" />}
    </svg>
  );
}

function Dock() {
  return (
    <div className="flex h-[101px] w-[2708px] rounded-t-xl border-x-2 border-t-2 border-[#857684] bg-[linear-gradient(#6b5c68,#7e6d7d)] pl-1 shadow-[0_0_0_1px_#2f2a30]">
      <div className="-mt-px flex">
        {apps.map((a) => <DockIcon key={a.id} {...a} />)}
        <span className="mt-[26px] mr-[16px] ml-[18px] h-[48px] w-[2px] bg-[#a89aa9]" />
        {running.map((a) => <DockIcon key={a.id} {...a} />)}
        <span className="mt-[14px] mr-[16px] ml-[18px] h-[72px] w-[2px] bg-[#a89aa9]" />
        {files.map((a) => <DockIcon key={a.id} {...a} />)}
      </div>
    </div>
  );
}

export default function App() {
  return (
    <div className={"flex h-[1800px] w-[2880px] flex-col overflow-hidden bg-[linear-gradient(#a08fae_0,#8d7c95_90%,#1e1a20_94.300%,#4c434e_95.500%,#8c7c92_97.500%,#b3a0b8)] " + UI}>
      <MenuBar />
      <div className="flex h-[1652px] shrink-0 flex-col overflow-hidden rounded-xl border-2 border-[#5d6163] border-l-[#2c2d2f]">
        <TabStrip />
        <Toolbar />
        <Page />
        <Downloads />
      </div>
      <div className="mt-[2px] pl-[86px]">
        <Dock />
      </div>
    </div>
  );
}
